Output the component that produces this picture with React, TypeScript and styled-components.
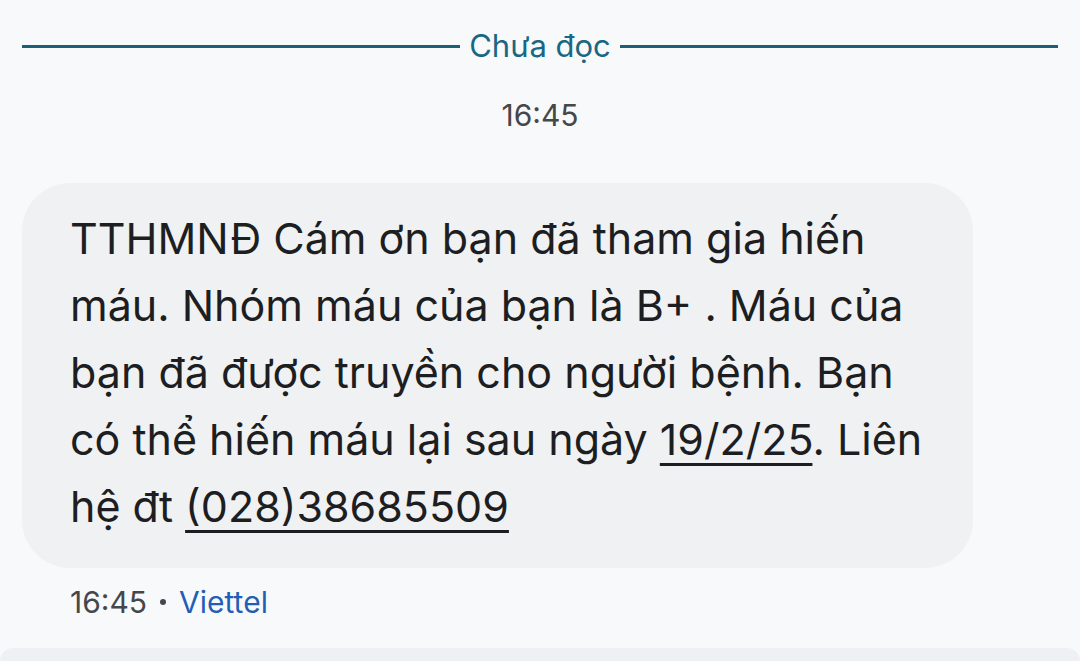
import * as React from 'react';
import styled, { createGlobalStyle } from 'styled-components';

const GlobalStyle = createGlobalStyle`
  html, body {
    margin: 0;
    padding: 0;
    background: #f8f9fb;
  }
  body {
    font-family: Inter, Roboto, "Noto Sans", "Liberation Sans", sans-serif;
    width: 1080px;
    height: 661px;
    overflow: hidden;
  }
`

const Screen = styled.div`
  width: 1080px;
  height: 661px;
  display: flex;
  flex-direction: column;
  background: #f8f9fb;
`
const Divider = styled.div`
  display: flex;
  align-items: center;
  gap: 9px;
  padding: 26px 22px 0;
  color: #186783;
  font-size: 31px;
  line-height: 40px;
`
const Rule = styled.div`
  flex: 1;
  height: 3px;
  background: #1b5f79;
`
const Stamp = styled.div`
  text-align: center;
  color: #45474b;
  font-size: 30px;
  line-height: 36px;
  margin-top: 31px;
`
const Thread = styled.div`
  display: flex;
  flex-direction: column;
  align-items: flex-start;
  padding: 50px 22px 0;
`
const Bubble = styled.div`
  width: 951px;
  box-sizing: border-box;
  padding: 22px 40px 28px 48px;
  background: #f0f1f3;
  border-radius: 48px;
  color: #1d1e21;
  font-size: 43px;
  line-height: 67px;
  white-space: nowrap;
`
const Link = styled.span`
  text-decoration: underline;
  text-decoration-thickness: 3px;
  text-underline-offset: 8px;
`
const Meta = styled.div`
  display: flex;
  align-items: center;
  gap: 13px;
  margin: 14px 0 0 48px;
  color: #45474b;
  font-size: 30px;
  line-height: 40px;
`
const Dot = styled.span`
  width: 6px;
  height: 6px;
  border-radius: 50%;
  background: #45474b;
`
const Carrier = styled.span`
  color: #1f5fb5;
`
const Composer = styled.div`
  margin-top: auto;
  height: 13px;
  background: #eef0f3;
  border-radius: 14px 14px 0 0;
`

export default function App() {
  return (
    <Screen>
      <GlobalStyle />
      <Divider>
        <Rule />
        <span>Chưa đọc</span>
        <Rule />
      </Divider>
      <Stamp>16:45</Stamp>
      <Thread>
        <Bubble>
          TTHMNĐ Cám ơn bạn đã tham gia hiến<br />
          máu. Nhóm máu của bạn là B+ . Máu của<br />
          bạn đã được truyền cho người bệnh. Bạn<br />
          có thể hiến máu lại sau ngày <Link>19/2/25</Link>. Liên<br />
          hệ đt <Link>(028)38685509</Link>
        </Bubble>
        <Meta>
          <span>16:45</span>
          <Dot />
          <Carrier>Viettel</Carrier>
        </Meta>
      </Thread>
      <Composer />
    </Screen>
  );
}
